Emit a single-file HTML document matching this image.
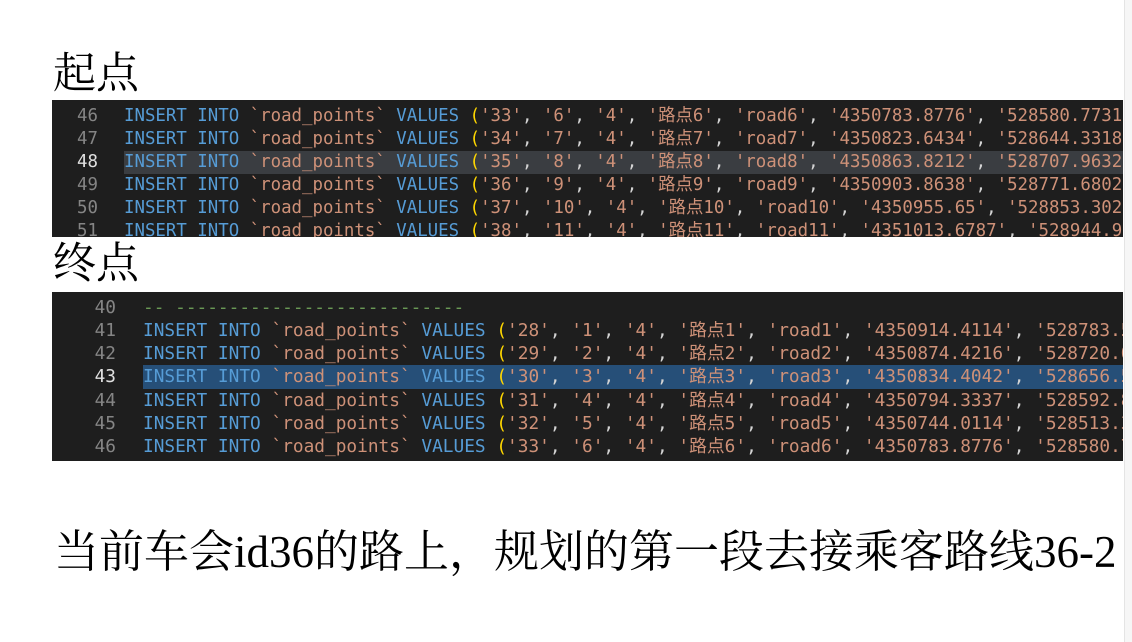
<!DOCTYPE html>
<html><head><meta charset="utf-8">
<style>
html,body{margin:0;padding:0;width:1132px;height:642px;overflow:hidden;background:#fff;}
.h{position:absolute;left:53px;font-family:"Liberation Serif","Noto Serif CJK SC",serif;font-size:43px;line-height:43px;color:#000;}
.blk{position:absolute;left:52px;width:1071px;background:#1e1e1e;overflow:hidden;font-family:"DejaVu Sans Mono","Liberation Mono","Noto Sans CJK SC",monospace;white-space:pre;}
.ln{position:absolute;left:0;width:100%;height:23px;}
.n{position:absolute;text-align:right;color:#858585;}
.c{position:absolute;color:#d4d4d4;}
.k{color:#569cd6}.s{color:#ce9178}.p{color:#ffd700}.g{color:#6a9955}
.cur .n{color:#e0e0e0}
.sb{position:absolute;left:1124px;top:0;width:8px;height:642px;background:#f6f6f6;border-left:1px solid #e4e4e4;}
.bt{position:absolute;left:54px;top:526px;font-family:"Liberation Serif","Noto Serif CJK SC",serif;font-size:45px;line-height:52px;white-space:nowrap;color:#000;}
</style></head><body>
<div class="h" style="top:53px">起点</div>
<div class="blk" style="top:100px;height:137px;font-size:17.4px;line-height:23px;">
<div class="ln" style="top:5px"><span class="n" style="left:0;width:46px">46</span><span class="c" style="left:72px"><span class="k">INSERT INTO</span> <span class="s">`road_points`</span> <span class="k">VALUES</span> <span class="p">(</span><span class="s">'33'</span>, <span class="s">'6'</span>, <span class="s">'4'</span>, <span class="s">'路点6'</span>, <span class="s">'road6'</span>, <span class="s">'4350783.8776'</span>, <span class="s">'528580.7731'</span></span></div>
<div class="ln" style="top:28px"><span class="n" style="left:0;width:46px">47</span><span class="c" style="left:72px"><span class="k">INSERT INTO</span> <span class="s">`road_points`</span> <span class="k">VALUES</span> <span class="p">(</span><span class="s">'34'</span>, <span class="s">'7'</span>, <span class="s">'4'</span>, <span class="s">'路点7'</span>, <span class="s">'road7'</span>, <span class="s">'4350823.6434'</span>, <span class="s">'528644.3318'</span></span></div>
<div class="ln cur" style="top:51px"><div style="position:absolute;left:72px;right:0;top:0;height:23px;background:#3a3d41"></div><span class="n" style="left:0;width:46px">48</span><span class="c" style="left:72px"><span class="k">INSERT INTO</span> <span class="s">`road_points`</span> <span class="k">VALUES</span> <span class="p">(</span><span class="s">'35'</span>, <span class="s">'8'</span>, <span class="s">'4'</span>, <span class="s">'路点8'</span>, <span class="s">'road8'</span>, <span class="s">'4350863.8212'</span>, <span class="s">'528707.9632'</span></span></div>
<div class="ln" style="top:74px"><span class="n" style="left:0;width:46px">49</span><span class="c" style="left:72px"><span class="k">INSERT INTO</span> <span class="s">`road_points`</span> <span class="k">VALUES</span> <span class="p">(</span><span class="s">'36'</span>, <span class="s">'9'</span>, <span class="s">'4'</span>, <span class="s">'路点9'</span>, <span class="s">'road9'</span>, <span class="s">'4350903.8638'</span>, <span class="s">'528771.6802'</span></span></div>
<div class="ln" style="top:97px"><span class="n" style="left:0;width:46px">50</span><span class="c" style="left:72px"><span class="k">INSERT INTO</span> <span class="s">`road_points`</span> <span class="k">VALUES</span> <span class="p">(</span><span class="s">'37'</span>, <span class="s">'10'</span>, <span class="s">'4'</span>, <span class="s">'路点10'</span>, <span class="s">'road10'</span>, <span class="s">'4350955.65'</span>, <span class="s">'528853.3021'</span></span></div>
<div class="ln" style="top:120px"><span class="n" style="left:0;width:46px">51</span><span class="c" style="left:72px"><span class="k">INSERT INTO</span> <span class="s">`road_points`</span> <span class="k">VALUES</span> <span class="p">(</span><span class="s">'38'</span>, <span class="s">'11'</span>, <span class="s">'4'</span>, <span class="s">'路点11'</span>, <span class="s">'road11'</span>, <span class="s">'4351013.6787'</span>, <span class="s">'528944.9'</span></span></div>
</div>
<div class="h" style="top:243px">终点</div>
<div class="blk" style="top:292px;height:169px;font-size:17.8px;line-height:23.3px;">
<div class="ln" style="top:3.5px;height:23.3px"><span class="n" style="left:0;width:64px">40</span><span class="c" style="left:91px"><span class="g">-- ---------------------------</span></span></div>
<div class="ln" style="top:26.8px;height:23.3px"><span class="n" style="left:0;width:64px">41</span><span class="c" style="left:91px"><span class="k">INSERT INTO</span> <span class="s">`road_points`</span> <span class="k">VALUES</span> <span class="p">(</span><span class="s">'28'</span>, <span class="s">'1'</span>, <span class="s">'4'</span>, <span class="s">'路点1'</span>, <span class="s">'road1'</span>, <span class="s">'4350914.4114'</span>, <span class="s">'528783.5112'</span></span></div>
<div class="ln" style="top:50.1px;height:23.3px"><span class="n" style="left:0;width:64px">42</span><span class="c" style="left:91px"><span class="k">INSERT INTO</span> <span class="s">`road_points`</span> <span class="k">VALUES</span> <span class="p">(</span><span class="s">'29'</span>, <span class="s">'2'</span>, <span class="s">'4'</span>, <span class="s">'路点2'</span>, <span class="s">'road2'</span>, <span class="s">'4350874.4216'</span>, <span class="s">'528720.0112'</span></span></div>
<div class="ln cur" style="top:73.4px;height:23.3px"><div style="position:absolute;left:91px;right:0;top:0;height:23.3px;background:#264f78"></div><span class="n" style="left:0;width:64px">43</span><span class="c" style="left:91px"><span class="k">INSERT INTO</span> <span class="s">`road_points`</span> <span class="k">VALUES</span> <span class="p">(</span><span class="s">'30'</span>, <span class="s">'3'</span>, <span class="s">'4'</span>, <span class="s">'路点3'</span>, <span class="s">'road3'</span>, <span class="s">'4350834.4042'</span>, <span class="s">'528656.5112'</span></span></div>
<div class="ln" style="top:96.7px;height:23.3px"><span class="n" style="left:0;width:64px">44</span><span class="c" style="left:91px"><span class="k">INSERT INTO</span> <span class="s">`road_points`</span> <span class="k">VALUES</span> <span class="p">(</span><span class="s">'31'</span>, <span class="s">'4'</span>, <span class="s">'4'</span>, <span class="s">'路点4'</span>, <span class="s">'road4'</span>, <span class="s">'4350794.3337'</span>, <span class="s">'528592.8112'</span></span></div>
<div class="ln" style="top:120px;height:23.3px"><span class="n" style="left:0;width:64px">45</span><span class="c" style="left:91px"><span class="k">INSERT INTO</span> <span class="s">`road_points`</span> <span class="k">VALUES</span> <span class="p">(</span><span class="s">'32'</span>, <span class="s">'5'</span>, <span class="s">'4'</span>, <span class="s">'路点5'</span>, <span class="s">'road5'</span>, <span class="s">'4350744.0114'</span>, <span class="s">'528513.3112'</span></span></div>
<div class="ln" style="top:143.3px;height:23.3px"><span class="n" style="left:0;width:64px">46</span><span class="c" style="left:91px"><span class="k">INSERT INTO</span> <span class="s">`road_points`</span> <span class="k">VALUES</span> <span class="p">(</span><span class="s">'33'</span>, <span class="s">'6'</span>, <span class="s">'4'</span>, <span class="s">'路点6'</span>, <span class="s">'road6'</span>, <span class="s">'4350783.8776'</span>, <span class="s">'528580.7112'</span></span></div>
</div>
<div class="bt">当前车会id36的路上，规划的第一段去接乘客路线36-2</div>
<div class="sb"></div>
</body></html>
